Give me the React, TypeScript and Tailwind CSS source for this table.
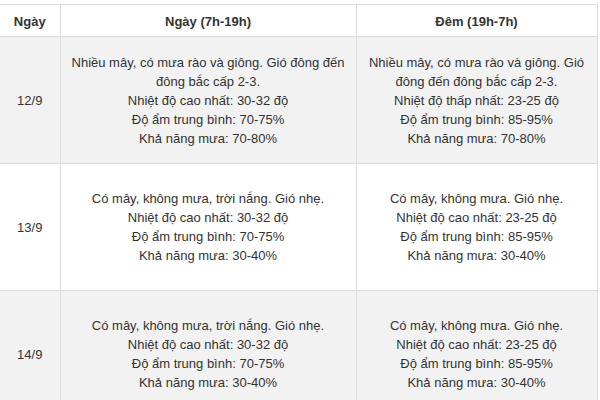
import React from 'react';

const rows = [
  {
    date: '12/9',
    day: [
      'Nhiều mây, có mưa rào và giông. Gió đông đến đông bắc cấp 2-3.',
      'Nhiệt độ cao nhất: 30-32 độ',
      'Độ ẩm trung bình: 70-75%',
      'Khả năng mưa: 70-80%',
    ],
    night: [
      'Nhiều mây, có mưa rào và giông. Gió đông đến đông bắc cấp 2-3.',
      'Nhiệt độ thấp nhất: 23-25 độ',
      'Độ ẩm trung bình: 85-95%',
      'Khả năng mưa: 70-80%',
    ],
  },
  {
    date: '13/9',
    day: [
      'Có mây, không mưa, trời nắng. Gió nhẹ.',
      'Nhiệt độ cao nhất: 30-32 độ',
      'Độ ẩm trung bình: 70-75%',
      'Khả năng mưa: 30-40%',
    ],
    night: [
      'Có mây, không mưa. Gió nhẹ.',
      'Nhiệt độ cao nhất: 23-25 độ',
      'Độ ẩm trung bình: 85-95%',
      'Khả năng mưa: 30-40%',
    ],
  },
  {
    date: '14/9',
    day: [
      'Có mây, không mưa, trời nắng. Gió nhẹ.',
      'Nhiệt độ cao nhất: 30-32 độ',
      'Độ ẩm trung bình: 70-75%',
      'Khả năng mưa: 30-40%',
    ],
    night: [
      'Có mây, không mưa. Gió nhẹ.',
      'Nhiệt độ cao nhất: 23-25 độ',
      'Độ ẩm trung bình: 85-95%',
      'Khả năng mưa: 30-40%',
    ],
  },
];

export default function App() {
  return (
    <div className="w-[600px] h-[400px] overflow-hidden bg-white pt-[4px] font-['Liberation_Sans',Arial,sans-serif] text-[13px] leading-[19px] text-[#333]">
      <table className="w-[597px] border-collapse table-fixed">
        <colgroup>
          <col className="w-[60px]" />
          <col className="w-[296px]" />
          <col className="w-[241px]" />
        </colgroup>
        <thead>
          <tr className="h-[32px] bg-white">
            <th className="border border-l-0 border-[#ddd] px-2 pt-[2px] font-bold text-center">Ngày</th>
            <th className="border border-[#ddd] px-2 pt-[2px] font-bold text-center">Ngày (7h-19h)</th>
            <th className="border border-[#ddd] px-2 pt-[2px] font-bold text-center">Đêm (19h-7h)</th>
          </tr>
        </thead>
        <tbody>
          {rows.map((r, i) => (
            <tr key={r.date} className={i % 2 === 0 ? 'h-[127px] bg-[#f2f2f2]' : 'h-[127px] bg-white'}>
              <td className="border border-l-0 border-[#ddd] text-center align-middle">{r.date}</td>
              <td className="border border-[#ddd] px-2 text-center align-middle">
                {r.day.map((l) => (
                  <div key={l}>{l}</div>
                ))}
              </td>
              <td className="border border-[#ddd] px-2 text-center align-middle">
                {r.night.map((l) => (
                  <div key={l}>{l}</div>
                ))}
              </td>
            </tr>
          ))}
        </tbody>
      </table>
    </div>
  );
}
